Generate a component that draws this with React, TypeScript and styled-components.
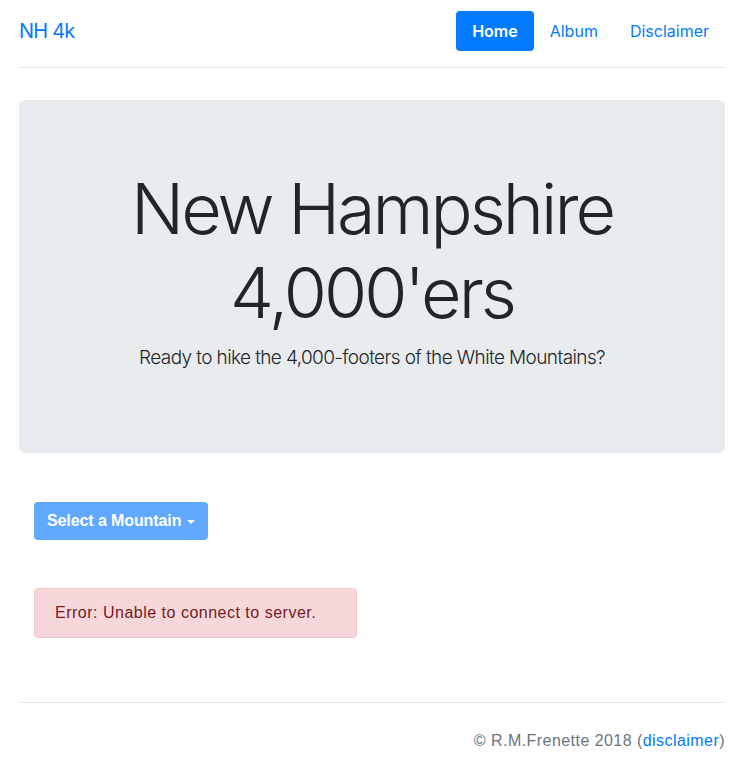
import React from "react";
import styled, { createGlobalStyle } from "styled-components";

const Global = createGlobalStyle`
  html, body { margin: 0; padding: 0; background: #fff; }
  body {
    font-family: Inter, "Liberation Sans", sans-serif;
    color: #212529;
    font-size: 16px;
    line-height: 1.5;
  }
  * { box-sizing: border-box; }
`;

const Page = styled.div`
  width: 706px;
  margin-left: 19px;
`;

const Header = styled.header`
  display: flex;
  align-items: center;
  justify-content: space-between;
  padding: 11px 0 16px;
  border-bottom: 1px solid #e5e5e5;
`;

const Brand = styled.a`
  font-size: 20px;
  line-height: 30px;
  color: #007bff;
  text-decoration: none;
  letter-spacing: -0.8px;
`;

const Nav = styled.nav`
  display: flex;
`;

const NavLink = styled.a<{ $active?: boolean }>`
  display: block;
  padding: 8px 16px;
  line-height: 24px;
  border-radius: 4px;
  font-size: 16px;
  text-decoration: none;
  color: ${(p) => (p.$active ? "#fff" : "#007bff")};
  background: ${(p) => (p.$active ? "#007bff" : "transparent")};
  font-weight: ${(p) => (p.$active ? 600 : 400)};
`;

const Jumbotron = styled.section`
  margin-top: 32px;
  background: #e9ecef;
  border-radius: 5px;
  padding: 67px 32px 64px;
  text-align: center;
`;

const Title = styled.h1`
  margin: 0 0 8px;
  font-size: 70px;
  font-weight: 300;
  line-height: 84px;
  letter-spacing: -3px;
`;

const Lead = styled.p`
  margin: 0 0 16px;
  font-size: 19px;
  font-weight: 300;
  line-height: 30px;
  letter-spacing: -0.6px;
`;

const Content = styled.main`
  padding: 49px 15px 0;
  font-family: "Liberation Sans", Arial, sans-serif;
`;

const SelectButton = styled.button`
  display: inline-flex;
  align-items: center;
  height: 38px;
  padding: 0 13px;
  border: none;
  border-radius: 4px;
  background: #61a9ff;
  color: #fff;
  font-family: "Liberation Sans", Arial, sans-serif;
  font-size: 16px;
  font-weight: 700;
  letter-spacing: -0.1px;
  cursor: default;
`;

const Caret = styled.span`
  display: inline-block;
  margin-left: 6px;
  margin-top: 1px;
  border-top: 4px solid #fff;
  border-left: 4px solid transparent;
  border-right: 4px solid transparent;
`;

const Alert = styled.div`
  display: inline-block;
  margin-top: 48px;
  padding: 12px 20px;
  width: 323px;
  background: #f8d7da;
  border: 1px solid #f5c6cb;
  border-radius: 4px;
  color: #721c24;
  font-size: 16px;
  line-height: 24px;
  letter-spacing: 0.5px;
`;

const Footer = styled.footer`
  margin-top: 64px;
  border-top: 1px solid #e5e5e5;
  padding-top: 26px;
  text-align: right;
  color: #6c757d;
  font-family: "Liberation Sans", Arial, sans-serif;
  font-size: 16px;
  line-height: 24px;
  letter-spacing: 0.45px;
`;

const FooterLink = styled.a`
  color: #007bff;
  text-decoration: none;
`;

export default function App() {
  return (
    <Page>
      <Global />
      <Header>
        <Brand href="#">NH 4k</Brand>
        <Nav>
          <NavLink $active href="#">Home</NavLink>
          <NavLink href="#">Album</NavLink>
          <NavLink href="#">Disclaimer</NavLink>
        </Nav>
      </Header>
      <Jumbotron>
        <Title>
          New Hampshire
          <br />
          4,000'ers
        </Title>
        <Lead>Ready to hike the 4,000-footers of the White Mountains?</Lead>
      </Jumbotron>
      <Content>
        <div>
          <SelectButton type="button">
            Select a Mountain
            <Caret />
          </SelectButton>
        </div>
        <Alert>Error: Unable to connect to server.</Alert>
      </Content>
      <Footer>
        © R.M.Frenette 2018 (<FooterLink href="#">disclaimer</FooterLink>)
      </Footer>
    </Page>
  );
}
